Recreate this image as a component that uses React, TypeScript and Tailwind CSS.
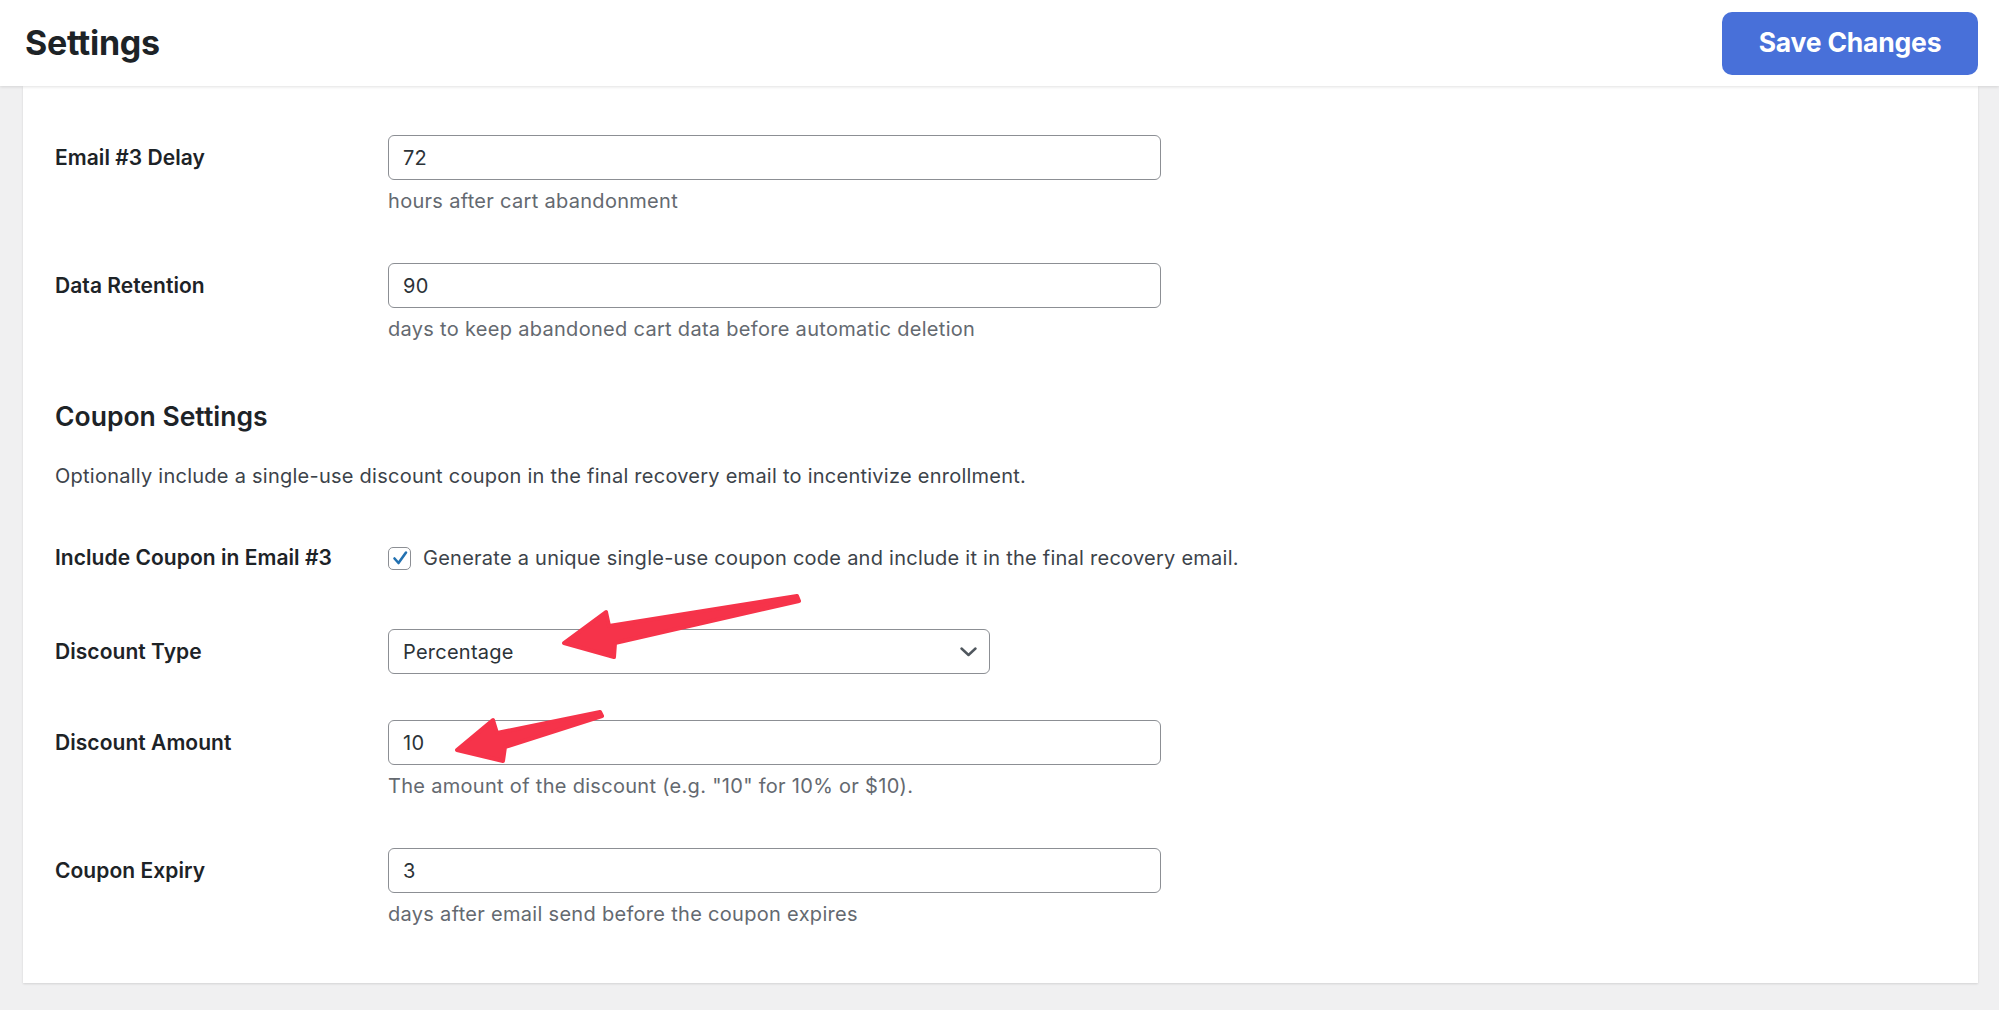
import React from "react";

function Label({ children, h = "h-[45px]" }: { children: React.ReactNode; h?: string }) {
  return (
    <div className={`w-[333px] shrink-0 flex items-center ${h} text-[21px] font-semibold text-[#1d2327] tracking-[0.05px]`}>
      {children}
    </div>
  );
}

function TextInput({ value }: { value: string }) {
  return (
    <input
      readOnly
      value={value}
      className="block w-[773px] h-[45px] rounded-[6px] border-[1.5px] border-[#8c8f94] bg-white px-[14px] text-[20px] tracking-[0.25px] text-[#2c3338] outline-none"
    />
  );
}

function Desc({ children }: { children: React.ReactNode }) {
  return <p className="mt-[7px] h-[28px] leading-[28px] text-[20px] tracking-[0.3px] text-[#646970]">{children}</p>;
}

export default function App() {
  return (
    <div className="relative w-[1999px] h-[1010px] overflow-hidden bg-[#f0f0f1] font-['Inter',sans-serif]">
      <header className="relative z-10 h-[86px] bg-white flex items-center justify-between pl-[25px] pr-[21px] shadow-[0_1px_3px_rgba(0,0,0,0.12)]">
        <h1 className="text-[34px] leading-[40px] font-bold text-[#1d2327] tracking-[-0.3px]">Settings</h1>
        <button className="w-[256px] h-[63px] rounded-[10px] bg-[#4870d9] text-white text-[26.5px] font-bold tracking-[-0.2px]">
          Save Changes
        </button>
      </header>

      <main className="pl-[23px] pr-[21px]">
        <div className="bg-white pl-[32px] pt-[25px] pb-[31px] shadow-[0_1px_2px_rgba(0,0,0,0.12)]">
          <div className="flex py-[24px]">
            <Label>Email #3 Delay</Label>
            <div>
              <TextInput value="72" />
              <Desc>hours after cart abandonment</Desc>
            </div>
          </div>

          <div className="flex py-[24px]">
            <Label>Data Retention</Label>
            <div>
              <TextInput value="90" />
              <Desc>days to keep abandoned cart data before automatic deletion</Desc>
            </div>
          </div>

          <h2 className="mt-[31px] h-[36px] leading-[36px] text-[26.5px] font-semibold text-[#1d2327]">Coupon Settings</h2>
          <p className="mt-[28px] h-[28px] leading-[28px] text-[20px] tracking-[0.25px] text-[#3c434a]">
            Optionally include a single-use discount coupon in the final recovery email to incentivize enrollment.
          </p>

          <div className="flex mt-[30px] pt-[24px] pb-[33px]">
            <Label h="h-[28px]">Include Coupon in Email #3</Label>
            <div className="flex items-center h-[28px]">
              <div className="w-[23px] h-[23px] rounded-[5px] border-[1.5px] border-[#8c8f94] bg-white flex items-center justify-center">
                <svg width="18" height="18" viewBox="0 0 18 18" fill="none">
                  <path d="M3.5 9.5 L7.5 14 L15 3.5" stroke="#2271b1" strokeWidth="2.6" strokeLinecap="round" strokeLinejoin="round" />
                </svg>
              </div>
              <span className="ml-[12px] text-[20px] leading-[28px] tracking-[0.25px] text-[#3c434a]">
                Generate a unique single-use coupon code and include it in the final recovery email.
              </span>
            </div>
          </div>

          <div className="flex pt-[24px] pb-[22px]">
            <Label>Discount Type</Label>
            <div className="w-[602px] h-[45px] rounded-[6px] border-[1.5px] border-[#8c8f94] bg-white pl-[14px] pr-[12px] flex items-center justify-between text-[20px] tracking-[0.25px] text-[#2c3338]">
              <span>Percentage</span>
              <svg width="17" height="10" viewBox="0 0 17 10" fill="none">
                <path d="M1.5 1.5 L8.5 8 L15.5 1.5" stroke="#50575e" strokeWidth="2.4" strokeLinecap="round" strokeLinejoin="round" />
              </svg>
            </div>
          </div>

          <div className="flex py-[24px]">
            <Label>Discount Amount</Label>
            <div>
              <TextInput value="10" />
              <Desc>The amount of the discount (e.g. "10" for 10% or $10).</Desc>
            </div>
          </div>

          <div className="flex py-[24px]">
            <Label>Coupon Expiry</Label>
            <div>
              <TextInput value="3" />
              <Desc>days after email send before the coupon expires</Desc>
            </div>
          </div>
        </div>
      </main>

      <svg className="absolute inset-0 pointer-events-none z-20" width="1999" height="1010" viewBox="0 0 1999 1010">
        <polygon
          points="564,643 606,612 609,626 797,596 799,601 615,643 614,657"
          fill="#f6334a"
          stroke="#f6334a"
          strokeWidth="4"
          strokeLinejoin="round"
        />
        <polygon
          points="457,750 493,720 497,733 600,712 602,716 505,747 503,761"
          fill="#f6334a"
          stroke="#f6334a"
          strokeWidth="4"
          strokeLinejoin="round"
        />
      </svg>
    </div>
  );
}
